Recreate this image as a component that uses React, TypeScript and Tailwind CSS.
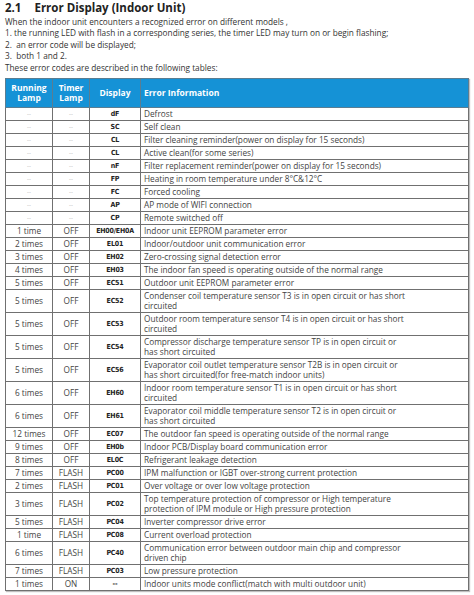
import React from "react";

type Row = { r: string; t: string; d: string; info: string[] };

const rows: Row[] = [
  { r: "--", t: "--", d: "dF", info: ["Defrost"] },
  { r: "--", t: "--", d: "SC", info: ["Self clean"] },
  { r: "--", t: "--", d: "CL", info: ["Filter cleaning reminder(power on display for 15 seconds)"] },
  { r: "--", t: "--", d: "CL", info: ["Active clean(for some series)"] },
  { r: "--", t: "--", d: "nF", info: ["Filter replacement reminder(power on display for 15 seconds)"] },
  { r: "--", t: "--", d: "FP", info: ["Heating in room temperature under 8°C&12°C"] },
  { r: "--", t: "--", d: "FC", info: ["Forced cooling"] },
  { r: "--", t: "--", d: "AP", info: ["AP mode of WIFI connection"] },
  { r: "--", t: "--", d: "CP", info: ["Remote switched off"] },
  { r: "1 time", t: "OFF", d: "EH00/EH0A", info: ["Indoor unit EEPROM parameter error"] },
  { r: "2 times", t: "OFF", d: "EL01", info: ["Indoor/outdoor unit communication error"] },
  { r: "3 times", t: "OFF", d: "EH02", info: ["Zero-crossing signal detection error"] },
  { r: "4 times", t: "OFF", d: "EH03", info: ["The indoor fan speed is operating outside of the normal range"] },
  { r: "5 times", t: "OFF", d: "EC51", info: ["Outdoor unit EEPROM parameter error"] },
  { r: "5 times", t: "OFF", d: "EC52", info: ["Condenser coil temperature sensor T3 is in open circuit or has short", "circuited"] },
  { r: "5 times", t: "OFF", d: "EC53", info: ["Outdoor room temperature sensor T4 is in open circuit or has short", "circuited"] },
  { r: "5 times", t: "OFF", d: "EC54", info: ["Compressor discharge temperature sensor TP is in open circuit or", "has short circuited"] },
  { r: "5 times", t: "OFF", d: "EC56", info: ["Evaporator coil outlet temperature sensor T2B is in open circuit or", "has short circuited(for free-match indoor units)"] },
  { r: "6 times", t: "OFF", d: "EH60", info: ["Indoor room temperature sensor T1 is in open circuit or has short", "circuited"] },
  { r: "6 times", t: "OFF", d: "EH61", info: ["Evaporator coil middle temperature sensor T2 is in open circuit or", "has short circuited"] },
  { r: "12 times", t: "OFF", d: "EC07", info: ["The outdoor fan speed is operating outside of the normal range"] },
  { r: "9 times", t: "OFF", d: "EH0b", info: ["Indoor PCB/Display board communication error"] },
  { r: "8 times", t: "OFF", d: "EL0C", info: ["Refrigerant leakage detection"] },
  { r: "7 times", t: "FLASH", d: "PC00", info: ["IPM malfunction or IGBT over-strong current protection"] },
  { r: "2 times", t: "FLASH", d: "PC01", info: ["Over voltage or over low voltage protection"] },
  { r: "3 times", t: "FLASH", d: "PC02", info: ["Top temperature protection of compressor or High temperature", "protection of IPM module or High pressure protection"] },
  { r: "5 times", t: "FLASH", d: "PC04", info: ["Inverter compressor drive error"] },
  { r: "1 time", t: "FLASH", d: "PC08", info: ["Current overload protection"] },
  { r: "6 times", t: "FLASH", d: "PC40", info: ["Communication error between outdoor main chip and compressor", "driven chip"] },
  { r: "7 times", t: "FLASH", d: "PC03", info: ["Low pressure protection"] },
  { r: "1 times", t: "ON", d: "--", info: ["Indoor units mode conflict(match with multi outdoor unit)"] },
];

export default function App() {
  return (
    <div
      className="w-[474px] h-[595px] bg-white overflow-hidden px-[5px] text-[#3a3a3a]"
      style={{ fontFamily: '"Open Sans", "Noto Sans", sans-serif' }}
    >
      <div className="flex gap-[13px] h-[15.8px] text-[11.5px] leading-[15.8px] font-bold text-[#222]">
        <span>2.1</span>
        <span>Error Display (Indoor Unit)</span>
      </div>
      <div className="text-[8.25px] leading-[11.45px] text-[#333]">
        <p>When the indoor unit encounters a recognized error on different models ,</p>
        <p>1. the running LED with flash in a corresponding series, the timer LED may turn on or begin flashing;</p>
        <p>2.&nbsp; an error code will be displayed;</p>
        <p>3.&nbsp; both 1 and 2.</p>
        <p>These error codes are described in the following tables:</p>
      </div>
      <table className="mt-[5px] w-[464px] border-collapse table-fixed text-[8.25px] leading-[10.5px] text-[#444] shadow-[1px_1px_1px_rgba(0,0,0,0.25)]">
        <colgroup>
          <col className="w-[47px]" />
          <col className="w-[37px]" />
          <col className="w-[51px]" />
          <col />
        </colgroup>
        <thead>
          <tr className="bg-[#1592d6] text-white font-bold text-[8.5px] leading-[10px] h-[29px]">
            <th className="border border-[#5a7d92] text-center font-bold">Running<br />Lamp</th>
            <th className="border border-[#5a7d92] text-center font-bold">Timer<br />Lamp</th>
            <th className="border border-[#5a7d92] text-center font-bold">Display</th>
            <th className="border border-[#5a7d92] text-left pl-[3px] font-bold">Error Information</th>
          </tr>
        </thead>
        <tbody>
          {rows.map((row, i) => {
            const two = row.info.length > 1;
            const dash = row.r === "--";
            return (
              <tr key={i} className={two ? "h-[23px]" : "h-[13px]"}>
                <td className={`border border-[#707070] text-center p-0 ${dash ? "text-[#aaa] text-[6px]" : ""}`}>{row.r}</td>
                <td className={`border border-[#707070] text-center p-0 ${dash ? "text-[#aaa] text-[6px]" : ""}`}>{row.t}</td>
                <td
                  className="border border-[#707070] text-center p-0 font-bold text-[#222] text-[7px] tracking-[-0.2px]"
                  style={{ fontFamily: '"DejaVu Sans Condensed", "DejaVu Sans", sans-serif' }}
                >
                  {row.d}
                </td>
                <td className="border border-[#707070] pl-[3px] py-0 whitespace-nowrap">
                  {row.info.map((l, j) => (
                    <div key={j}>{l}</div>
                  ))}
                </td>
              </tr>
            );
          })}
        </tbody>
      </table>
    </div>
  );
}
